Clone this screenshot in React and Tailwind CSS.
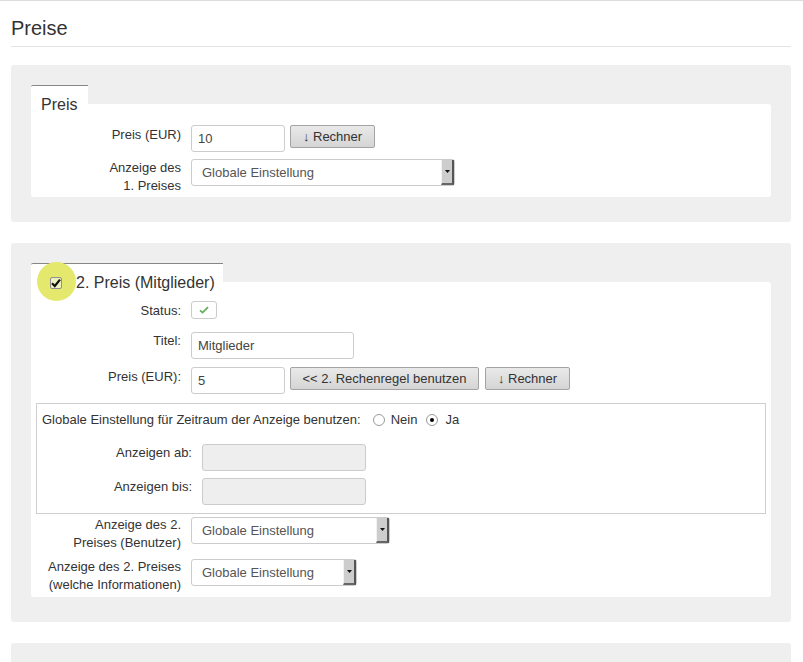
import React from "react";

function Label({ children, className = "" }) {
  return (
    <div className={"w-[150px] shrink-0 text-right leading-[18px] " + className}>
      {children}
    </div>
  );
}

function Input({ value = "", w, disabled }) {
  return (
    <div
      className={
        "h-[27px] border border-[#ccc] rounded-[3px] px-[6px] flex items-center text-[#444] " +
        (disabled ? "bg-[#eee] " : "bg-white ") +
        w
      }
    >
      {value}
    </div>
  );
}

function Button({ children, w }) {
  return (
    <div
      className={
        "h-[23px] border border-[#a3a3a3] rounded-[2px] bg-gradient-to-b from-[#e9e9e9] to-[#d5d5d5] flex items-center justify-center text-[#333] " +
        w
      }
    >
      {children}
    </div>
  );
}

function Select({ w }) {
  return (
    <div className={"h-[27px] flex border border-[#ccc] rounded-[3px] bg-white " + w}>
      <div className="flex-1 flex items-center pl-[10px] text-[#555]">Globale Einstellung</div>
      <div className="w-[13px] bg-[#cdcdcd] border-l border-l-[#f2f2f2] border-r-2 border-r-[#555] border-b-2 border-b-[#666] flex items-center justify-center">
        <svg width="5" height="3" viewBox="0 0 5 3">
          <path d="M0 0h5L2.5 3z" fill="#111" />
        </svg>
      </div>
    </div>
  );
}

function Radio({ checked }) {
  return (
    <span className="w-[12px] h-[12px] rounded-full border border-[#9a9a9a] bg-white flex items-center justify-center">
      {checked && <span className="w-[4px] h-[4px] rounded-full bg-black" />}
    </span>
  );
}

function Tab({ children, className = "" }) {
  return (
    <div className={"h-[19px] bg-white border-t border-[#8a8585] rounded-tl-[2px] " + className}>
      <div className="mt-[9px] h-[20px] flex items-center text-[16px] leading-[20px] text-[#333]">
        {children}
      </div>
    </div>
  );
}

export default function App() {
  return (
    <div className="min-h-[662px] bg-white border-t border-[#dcdcdc] font-['Liberation_Sans',Arial,sans-serif] text-[13px] text-[#333]">
      <div className="ml-[11px] w-[780px]">
        <h1 className="pt-[15px] pb-[6px] text-[20px] leading-[24px] border-b border-[#e3e3e3]">Preise</h1>

        {/* Preis */}
        <div className="mt-[18px] bg-[#efefef] rounded-[3px] px-[20px] pt-[20px] pb-[25px]">
          <Tab className="w-[57px] pl-[10px]">Preis</Tab>
          <div className="bg-white rounded-tr-[3px] rounded-b-[3px] pt-[21px] pb-[2px]">
            <div className="flex items-start">
              <Label className="pt-[1px]">Preis (EUR)</Label>
              <div className="ml-[10px]">
                <Input value="10" w="w-[94px]" />
              </div>
              <div className="ml-[5px]">
                <Button w="w-[85px]">↓ Rechner</Button>
              </div>
            </div>
            <div className="flex items-start mt-[7px]">
              <Label>
                Anzeige des
                <br />
                1. Preises
              </Label>
              <div className="ml-[10px]">
                <Select w="w-[264px]" />
              </div>
            </div>
          </div>
        </div>

        {/* 2. Preis */}
        <div className="mt-[21px] bg-[#efefef] rounded-[3px] px-[20px] pt-[20px] pb-[25px]">
          <Tab className="w-[192px] pl-[19px]">
            <span className="relative w-[12px] h-[12px] shrink-0">
              <span className="absolute left-[-13px] top-[-15px] w-[39px] h-[39px] rounded-full bg-[#e4e86c]" />
              <span className="absolute inset-0 border border-[#8f8f8f] rounded-[2px] bg-[#eef0c0]" />
              <svg className="absolute left-[-1px] top-[-1px]" width="14" height="14" viewBox="0 0 14 14">
                <path d="M3 7.2L5.8 10L11 3.6" fill="none" stroke="#111" strokeWidth="2.2" />
              </svg>
            </span>
            <span className="ml-[14px]">2. Preis (Mitglieder)</span>
          </Tab>
          <div className="bg-white rounded-tr-[3px] rounded-b-[3px] pt-[19px] pb-[3px]">
            <div className="flex items-start">
              <Label className="pt-[1px]">Status:</Label>
              <div className="ml-[10px] w-[26px] h-[18px] border border-[#ccc] rounded-[3px] flex items-center justify-center">
                <svg width="10" height="8" viewBox="0 0 10 8">
                  <path d="M1 4.3L3.6 6.6L9 1.2" fill="none" stroke="#62b05a" strokeWidth="1.8" />
                </svg>
              </div>
            </div>
            <div className="flex items-start mt-[12px]">
              <Label>Titel:</Label>
              <div className="ml-[10px]">
                <Input value="Mitglieder" w="w-[163px]" />
              </div>
            </div>
            <div className="flex items-start mt-[8px]">
              <Label className="pt-[1px]">Preis (EUR):</Label>
              <div className="ml-[10px]">
                <Input value="5" w="w-[94px]" />
              </div>
              <div className="ml-[5px]">
                <Button w="w-[189px]">&lt;&lt; 2. Rechenregel benutzen</Button>
              </div>
              <div className="ml-[6px]">
                <Button w="w-[85px]">↓ Rechner</Button>
              </div>
            </div>

            <div className="mt-[9px] mx-[5px] border border-[#cfcfcf] px-[5px] pt-[7px] pb-[8px]">
              <div className="flex items-center leading-[18px]">
                <span>Globale Einstellung für Zeitraum der Anzeige benutzen:</span>
                <span className="ml-[12px]">
                  <Radio />
                </span>
                <span className="ml-[6px]">Nein</span>
                <span className="ml-[9px]">
                  <Radio checked />
                </span>
                <span className="ml-[7px]">Ja</span>
              </div>
              <div className="flex items-start mt-[15px]">
                <Label>Anzeigen ab:</Label>
                <div className="ml-[10px]">
                  <Input disabled w="w-[164px]" />
                </div>
              </div>
              <div className="flex items-start mt-[7px]">
                <Label>Anzeigen bis:</Label>
                <div className="ml-[10px]">
                  <Input disabled w="w-[164px]" />
                </div>
              </div>
            </div>

            <div className="flex items-start mt-[2px]">
              <Label>
                Anzeige des 2.
                <br />
                Preises (Benutzer)
              </Label>
              <div className="ml-[10px] mt-[1px]">
                <Select w="w-[199px]" />
              </div>
            </div>
            <div className="flex items-start mt-[6px]">
              <Label>
                Anzeige des 2. Preises
                <br />
                (welche Informationen)
              </Label>
              <div className="ml-[10px] mt-[1px]">
                <Select w="w-[166px]" />
              </div>
            </div>
          </div>
        </div>

        <div className="mt-[21px] h-[30px] bg-[#efefef] rounded-t-[3px]" />
      </div>
    </div>
  );
}
